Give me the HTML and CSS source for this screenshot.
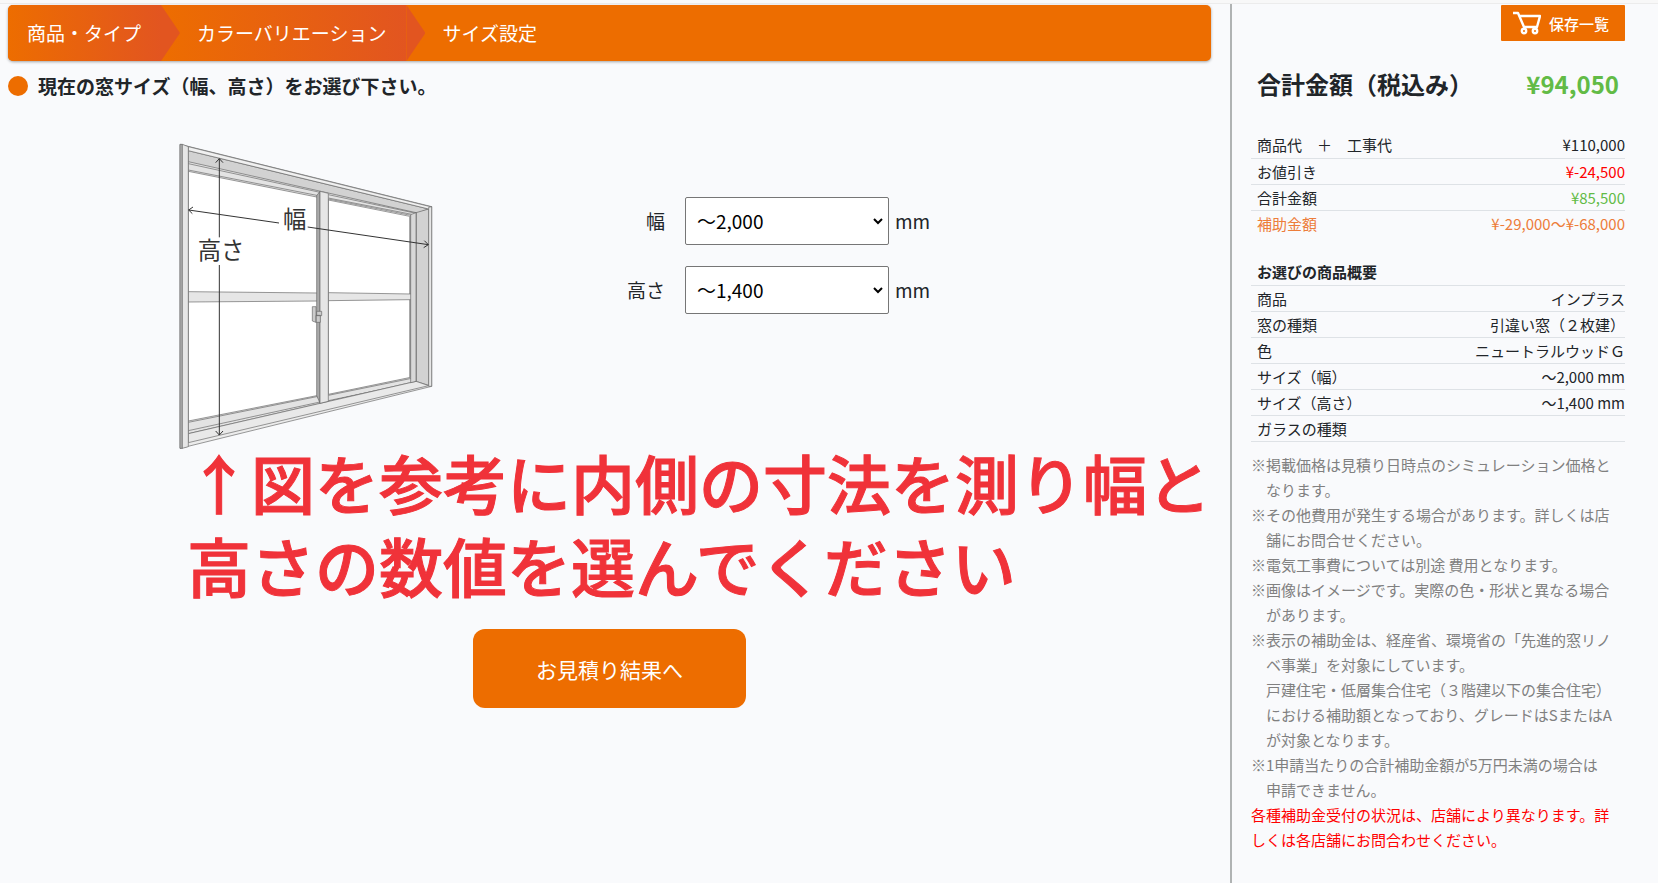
FILE: index.html
```html
<!DOCTYPE html>
<html lang="ja">
<head>
<meta charset="utf-8">
<title>サイズ設定</title>
<link rel="stylesheet" href="styles.css">
</head>
<body>
<div class="topbar"></div>
<div class="layout">
  <main class="main">
    <nav class="steps">
      <a class="step step-done" href="#">商品・タイプ</a>
      <a class="step step-done" href="#">カラーバリエーション</a>
      <a class="step" href="#">サイズ設定</a>
    </nav>
    <h1 class="question">現在の窓サイズ（幅、高さ）をお選び下さい。</h1>
    <div class="sizing">
      <svg class="window" viewBox="0 0 870 960" role="img" aria-label="窓の幅と高さ" stroke="#666" stroke-width="2" stroke-linejoin="round">
        <path fill="#ececec" d="M60 43L815 230V769L60 955Z"/>
        <path fill="#d2d2d2" d="M85 62L806 237L770 250L85 101Z"/>
        <path fill="#d2d2d2" d="M806 237V766L768 754V248Z"/>
        <path fill="#f0f0f0" d="M85 50L815 231L806 237L85 62Z"/>
        <path fill="#e3e3e3" d="M85 95L768 248V754L85 911Z"/>
        <path fill="#fff" d="M85 124L475 202V796L85 873Z"/>
        <path fill="#fff" d="M505 207L752 256V742L505 793Z"/>
        <path fill="none" d="M85 101L480 187M505 194L768 250M85 120L475 197M505 204L755 253M505 210L749 259V742M85 902L480 816M505 812L768 757M85 877L475 799M505 796L755 745"/>
        <path fill="#e9e9e9" d="M85 911L768 754L806 767L85 938Z"/>
        <path fill="#e6e6e6" d="M85 485L475 489V513L85 516ZM505 488L755 492V509L505 512Z"/>
        <path fill="#aaa" d="M470 197L480 184V819L470 797Z"/>
        <path fill="#e6e6e6" d="M480 184L505 190V814L480 820Z"/>
        <path fill="#d8d8d8" d="M752 254L768 248V754L752 758Z"/>
        <path fill="#ccc" d="M457 530H468V577L457 573ZM468 556H481V577H468ZM470 544H485V557H470Z"/>
        <path fill="#b5b5b5" d="M60 43H67V955H60Z"/>
        <path fill="#e6e6e6" d="M67 43L85 50V950L67 955ZM806 232L815 230V769H806Z"/>
        <path fill="none" stroke="#333" stroke-width="3" d="M178 86V322M178 405V915M167 98L178 86L189 98M167 903L178 915L189 903M86 240L357 279M443 291L805 344M99 231L86 240L97 251M793 332L805 344L791 353"/>
        <g class="window-label"><text x="369" y="295">幅</text><text x="113" y="388">高さ</text></g>
      </svg>
      <form class="fields">
        <div class="field">
          <label class="field-label" for="width">幅</label>
          <select class="select" id="width"><option>～2,000</option></select>
          <span>mm</span>
        </div>
        <div class="field">
          <label class="field-label" for="height">高さ</label>
          <select class="select" id="height"><option>～1,400</option></select>
          <span>mm</span>
        </div>
      </form>
    </div>
    <p class="hint">↑図を参考に内側の寸法を測り幅と高さの数値を選んでください</p>
    <button class="submit" type="button">お見積り結果へ</button>
  </main>
  <aside class="side">
    <button class="saved" type="button">
      <svg class="cart" viewBox="0 0 28 24" fill="none" stroke="#fff" stroke-width="2.4" stroke-linejoin="round"><path d="M0 2H5L11 16H24L27 5H7"/><circle cx="11" cy="20" r="2.2"/><circle cx="22" cy="20" r="2.2"/></svg>
      保存一覧
    </button>
    <div class="total"><span>合計金額（税込み）</span><span class="green">¥94,050</span></div>
    <table class="table table-price">
      <tr><th>商品代　＋　工事代</th><td>¥110,000</td></tr>
      <tr class="row-red"><th>お値引き</th><td>¥-24,500</td></tr>
      <tr class="row-green"><th>合計金額</th><td>¥85,500</td></tr>
      <tr class="row-orange"><th>補助金額</th><td>¥-29,000～¥-68,000</td></tr>
    </table>
    <table class="table">
      <tr><th class="table-title" colspan="2">お選びの商品概要</th></tr>
      <tr><th>商品</th><td>インプラス</td></tr>
      <tr><th>窓の種類</th><td>引違い窓（２枚建）</td></tr>
      <tr><th>色</th><td>ニュートラルウッドＧ</td></tr>
      <tr><th>サイズ（幅）</th><td>～2,000 mm</td></tr>
      <tr><th>サイズ（高さ）</th><td>～1,400 mm</td></tr>
      <tr><th>ガラスの種類</th><td></td></tr>
    </table>
    <div class="notes">
      <p class="note">※掲載価格は見積り日時点のシミュレーション価格となります。</p>
      <p class="note">※その他費用が発生する場合があります。詳しくは店舗にお問合せください。</p>
      <p class="note">※電気工事費については別途 費用となります。</p>
      <p class="note">※画像はイメージです。実際の色・形状と異なる場合があります。</p>
      <p class="note">※表示の補助金は、経産省、環境省の「先進的窓リノベ事業」を対象にしています。</p>
      <p class="note note-more">戸建住宅・低層集合住宅（３階建以下の集合住宅）における補助額となっており、グレードはSまたはAが対象となります。</p>
      <p class="note">※1申請当たりの合計補助金額が5万円未満の場合は<br>申請できません。</p>
      <p class="note-red">各種補助金受付の状況は、店舗により異なります。詳しくは各店舗にお問合わせください。</p>
    </div>
  </aside>
</div>
</body>
</html>
```

FILE: styles.css
```css
* { box-sizing: border-box; }
body {
  margin: 0;
  min-height: 100vh;
  display: flex;
  flex-direction: column;
  background: #f9fafc;
  color: #212529;
  font: 19px/28px "Noto Sans CJK JP", sans-serif;
}
h1, p { margin: 0; }
button, select { font: inherit; }
.topbar { height: 4px; background: #f8f8f8; border-bottom: 1px solid #ececec; }
.layout { flex: 1; display: flex; }
.main { flex: 1; min-width: 0; padding: 1px 19px 0 8px; }
.steps {
  display: flex;
  height: 56px;
  border-radius: 5px;
  overflow: hidden;
  background: #ed6d00;
  box-shadow: 0 1px 3px rgba(0, 0, 0, .35);
}
.step {
  position: relative;
  display: flex;
  align-items: center;
  padding: 0 20px 0 19px;
  color: #fff;
  text-decoration: none;
}
.step + .step { padding-left: 36px; }
.step-done { background: linear-gradient(90deg, #ed6d00, #e25520); }
.step-done::after {
  content: "";
  position: absolute;
  z-index: 1;
  left: 100%;
  top: 0;
  bottom: 0;
  width: 19px;
  background: #e25520;
  clip-path: polygon(0 0, 100% 50%, 0 100%);
}
.question {
  display: flex;
  align-items: center;
  gap: 10px;
  margin-top: 11px;
  font-size: 19px;
  font-weight: 700;
}
.question::before {
  content: "";
  width: 20px;
  height: 20px;
  border-radius: 50%;
  background: #ed6d00;
}
.sizing { display: flex; padding: 30px 0 0 152px; }
.window { width: 290px; height: 320px; flex: none; }
.window-label { font-size: 70px; fill: #333; stroke: none; }
.fields {
  display: flex;
  flex-direction: column;
  gap: 21px;
  margin: 67px 0 0 165px;
}
.field { display: flex; align-items: center; gap: 6px; }
.field-label { width: 50px; margin-right: 14px; text-align: right; }
.select {
  appearance: none;
  width: 204px;
  height: 48px;
  padding: 0 11px;
  border: 1px solid #767676;
  border-radius: 2px;
  background: #fff url("data:image/svg+xml,%3Csvg xmlns='http://www.w3.org/2000/svg' width='10' height='7'%3E%3Cpath d='M1 1L5 5L9 1' fill='none' stroke='black' stroke-width='2'/%3E%3C/svg%3E") no-repeat right 5px center;
  color: #000;
}
.hint {
  margin-top: -10px;
  padding-left: 179px;
  color: #f03239;
  font-size: 64px;
  line-height: 83px;
  font-weight: 500;
  -webkit-text-stroke: 1px #f03239;
  line-break: anywhere;
}
.submit {
  display: block;
  width: 273px;
  height: 79px;
  margin: 23px auto 0;
  border: 0;
  border-radius: 12px;
  background: #ed6d00;
  color: #fff;
  font-size: 21px;
}
.side {
  flex: none;
  width: 428px;
  padding: 1px 33px 0 19px;
  border-left: 2px solid #b0b3b3;
  font-size: 15px;
  line-height: 25px;
}
.saved {
  display: flex;
  align-items: center;
  gap: 8px;
  width: 124px;
  height: 36px;
  margin-left: auto;
  padding: 0 12px;
  border: 0;
  border-radius: 1px;
  background: #ed6d00;
  color: #fff;
  font-weight: 500;
}
.cart { width: 28px; height: 24px; flex: none; }
.total {
  display: flex;
  justify-content: space-between;
  padding: 25px 6px 0;
  font-size: 24px;
  line-height: 36px;
  font-weight: 700;
}
.green { color: #62bb46; }
.table { width: 100%; border-collapse: collapse; }
.table-price { margin: 30px 0 23px; }
.table th, .table td {
  height: 26px;
  padding: 0;
  border-bottom: 1px solid #dee2e6;
  font-weight: 400;
  text-align: left;
}
.table th { padding-left: 6px; }
.table td { text-align: right; }
.table .table-title { font-weight: 700; }
.table-price tr:last-child > * { border-bottom: 0; }
.row-red td { color: #f00; }
.row-green td { color: #62bb46; }
.row-orange > * { color: #ed7d3a; }
.notes { margin-top: 10px; padding-right: 8px; color: #808080; }
.note { padding-left: 15px; text-indent: -15px; }
.note-more { text-indent: 0; }
.note-red { color: #f00; }
```
